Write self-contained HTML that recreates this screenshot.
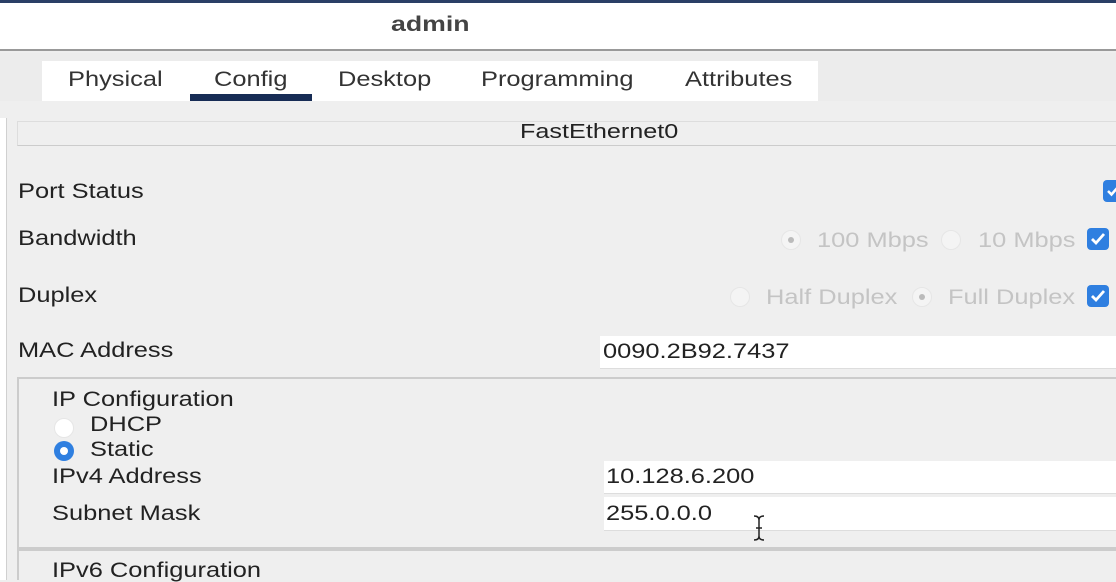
<!DOCTYPE html>
<html><head><style>
body{margin:0;width:1116px;height:580px;overflow:hidden;background:#eeeeee;font-family:"Liberation Sans",sans-serif;color:#222;position:relative}
div{position:absolute;box-sizing:border-box}
.t{font-size:21px;white-space:nowrap;line-height:1;transform:scaleX(1.21);transform-origin:0 0}
.g{color:#c4c4c4}
.cb{width:22px;height:22px;background:#2f7fe0;border-radius:4px}
.cb svg{position:absolute;left:3px;top:4px}
.rd{width:20px;height:20px;border-radius:50%;background:#f4f4f4;border:1px solid #e6e6e6}
.rd.s::after{content:"";position:absolute;left:6px;top:6px;width:6px;height:6px;border-radius:50%;background:#bbb}
.in{background:#fff;border-bottom:1px solid #ddd}
</style></head><body>
<div style="left:0;top:0;width:1116px;height:3px;background:#2a3f66"></div>
<div style="left:0;top:3px;width:1116px;height:48px;background:#fff;border-bottom:2px solid #999"></div>
<div class="t" style="left:391px;top:14px;font-weight:bold;color:#444;transform:scaleX(1.27)">admin</div>
<div style="left:0;top:53px;width:1116px;height:48px;background:#ececec"></div>
<div style="left:42px;top:61px;width:776px;height:40px;background:#fff"></div>
<div class="t" style="left:68px;top:69px;color:#333">Physical</div>
<div class="t" style="left:214px;top:69px;color:#333">Config</div>
<div style="left:190px;top:94px;width:122px;height:7px;background:#172c55"></div>
<div class="t" style="left:338px;top:69px;color:#333">Desktop</div>
<div class="t" style="left:481px;top:69px;color:#333">Programming</div>
<div class="t" style="left:685px;top:69px;color:#333">Attributes</div>
<div style="left:0;top:101px;width:1116px;height:479px;background:#efefef"></div>
<div style="left:0;top:118px;width:7px;height:462px;background:#fff;border-right:1px solid #d0d0d0"></div>
<div style="left:17px;top:121px;width:1099px;height:25px;border-top:1px solid #ddd;border-bottom:1px solid #ccc;border-left:1px solid #ddd"></div>
<div class="t" style="left:520px;top:122px;font-size:20px;transform:scaleX(1.26)">FastEthernet0</div>
<div class="t" style="left:18px;top:181px">Port Status</div>
<div class="cb" style="left:1103px;top:180px"><svg width="14" height="14"><path d="M2 7l3.5 3.5L12 3" stroke="#fff" stroke-width="2.5" fill="none"/></svg></div>
<div class="t" style="left:18px;top:228px">Bandwidth</div>
<div class="rd s" style="left:781px;top:230px"></div>
<div class="t g" style="left:817px;top:230px">100 Mbps</div>
<div class="rd" style="left:941px;top:230px"></div>
<div class="t g" style="left:978px;top:230px">10 Mbps</div>
<div class="cb" style="left:1087px;top:228px"><svg width="16" height="14"><path d="M2 7l4 4L14 2" stroke="#fff" stroke-width="2.8" fill="none"/></svg></div>
<div class="t" style="left:18px;top:285px">Duplex</div>
<div class="rd" style="left:730px;top:287px"></div>
<div class="t g" style="left:766px;top:287px">Half Duplex</div>
<div class="rd s" style="left:912px;top:287px"></div>
<div class="t g" style="left:948px;top:287px">Full Duplex</div>
<div class="cb" style="left:1087px;top:285px"><svg width="16" height="14"><path d="M2 7l4 4L14 2" stroke="#fff" stroke-width="2.8" fill="none"/></svg></div>
<div class="t" style="left:18px;top:340px">MAC Address</div>
<div class="in" style="left:600px;top:336px;width:516px;height:33px"></div>
<div class="t" style="left:603px;top:341px">0090.2B92.7437</div>
<div style="left:17px;top:377px;width:1099px;height:172px;border:2px solid #ccc;border-right:none"></div>
<div class="t" style="left:52px;top:389px">IP Configuration</div>
<div class="rd" style="left:54px;top:418px;background:#fff"></div>
<div class="t" style="left:90px;top:414px">DHCP</div>
<div style="left:54px;top:441px;width:20px;height:20px;border-radius:50%;background:#2f7fe0"><div style="left:6px;top:6px;width:8px;height:8px;border-radius:50%;background:#fff"></div></div>
<div class="t" style="left:90px;top:439px">Static</div>
<div class="t" style="left:52px;top:466px">IPv4 Address</div>
<div class="in" style="left:604px;top:461px;width:512px;height:33px"></div>
<div class="t" style="left:606px;top:466px">10.128.6.200</div>
<div class="t" style="left:52px;top:503px">Subnet Mask</div>
<div class="in" style="left:604px;top:497px;width:512px;height:34px"></div>
<div class="t" style="left:606px;top:503px">255.0.0.0</div>
<svg style="position:absolute;left:752px;top:514px" width="14" height="30"><path d="M2 2q5 0 5 4v16q0 4 -5 4M12 2q-5 0 -5 4M12 26q-5 0 -5 -4M4 14h6" stroke="#222" stroke-width="1.5" fill="none"/></svg>
<div style="left:17px;top:549px;width:1099px;height:31px;border-left:2px solid #ccc;border-top:2px solid #ccc"></div>
<div class="t" style="left:52px;top:560px">IPv6 Configuration</div>
</body></html>
